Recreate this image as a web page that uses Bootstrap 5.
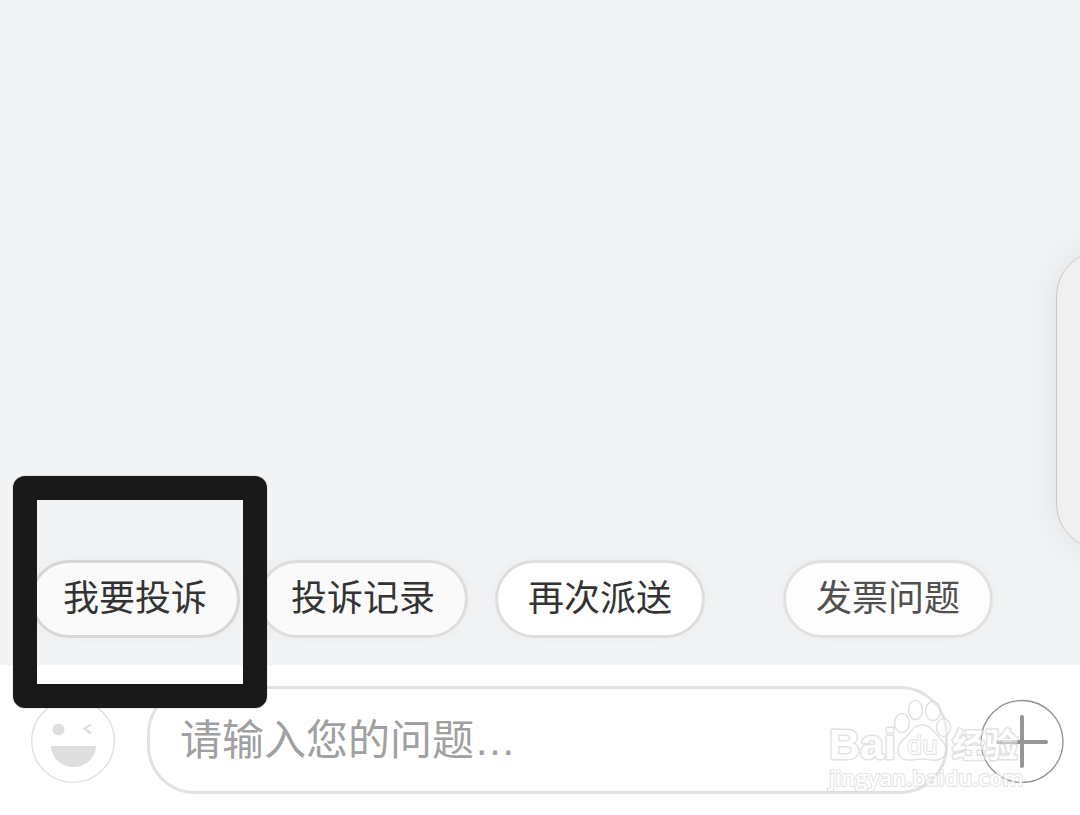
<!DOCTYPE html>
<html lang="zh-CN">
<head>
<meta charset="utf-8">
<meta name="viewport" content="width=device-width, initial-scale=1">
<title>客服</title>
<link href="https://cdn.jsdelivr.net/npm/bootstrap@5.3.0/dist/css/bootstrap.min.css" rel="stylesheet">
<style>
  body { background: #f2f3f5; font-family: "Liberation Sans", "Noto Sans CJK SC", sans-serif; }
  .quick-bar { padding: 0 30px 27px; }
  .chip {
    width: 210px; height: 78px; padding: 0; border: 3px solid #dcdddd; border-radius: 39px;
    background: #fff; color: #333; font-size: 36px; line-height: 54px; white-space: nowrap;
    box-shadow: 0 0 16px rgba(0, 0, 0, .03);
  }
  .chip-first { background: #fafafa; border-color: #d6d6d6; }
  .chip-soft { background: #fafafa; margin-left: 18px; }
  .chip-third { margin-left: 27px; }
  .chip-last { background: #fdfdfd; border-color: #e0e1e1; color: #505050; margin-left: 78px; }
  .composer { height: 150px; padding: 21px 16px 0 31px; background: #fff; }
  .composer-row { height: 108px; }
  .message-box {
    height: 108px; margin: 0 32px; padding: 2px 30px 0; border: 3px solid #e2e2e2; border-radius: 48px;
    background: #fff; font-size: 42px; min-width: 0;
  }
  .message-box::placeholder { color: #a0a0a0; opacity: 1; }
  .round-btn { width: 84px; height: 84px; margin-top: 2px; }
  .side-panel {
    right: -80px; top: 251px; width: 104px; height: 298px; border: 1px solid #c6c8ca; border-radius: 45px;
    background: #f0f0f0; box-shadow: 0 0 40px rgba(0, 0, 0, .08);
  }
  .callout-ring { left: 13px; bottom: 107px; width: 254px; height: 232px; border: 24px solid #191919; border-radius: 12px; box-shadow: 0 0 1px #555; pointer-events: none; }
  .watermark { right: 50px; bottom: 20px; width: 210px; height: 100px; pointer-events: none; }
</style>
</head>
<body>
<div class="position-relative d-flex flex-column min-vh-100 overflow-hidden">
  <main class="flex-grow-1"></main>
  <aside class="side-panel position-absolute"></aside>

  <nav class="quick-bar d-flex" aria-label="快捷问题">
    <button type="button" class="chip chip-first flex-shrink-0">我要投诉</button>
    <button type="button" class="chip chip-soft flex-shrink-0">投诉记录</button>
    <button type="button" class="chip chip-third flex-shrink-0">再次派送</button>
    <button type="button" class="chip chip-last flex-shrink-0">发票问题</button>
  </nav>

  <form class="composer">
    <div class="composer-row d-flex align-items-center">
      <button type="button" class="round-btn btn p-0 border-0 flex-shrink-0 d-flex" aria-label="表情">
        <svg width="84" height="84" viewBox="0 0 84 84" fill="none">
          <circle cx="42" cy="42" r="41.3" stroke="#dedede" stroke-width="1.3"/>
          <circle cx="27.5" cy="30.5" r="6" fill="#dedede"/>
          <path d="M60 25.500L53.500 29.500L60 34.500" stroke="#dedede" stroke-width="2.500"/>
          <path d="M20 47H65C64.500 59 55 68 42.500 68S20.500 59 20 47Z" fill="#dedede"/>
        </svg>
      </button>
      <input type="text" class="message-box flex-grow-1" placeholder="请输入您的问题…" aria-label="问题">
      <button type="button" class="round-btn btn p-0 border-0 flex-shrink-0 d-flex" aria-label="更多">
        <svg width="84" height="84" viewBox="0 0 84 84" fill="none">
          <circle cx="42" cy="42.500" r="41" stroke="#909090" stroke-width="1.300"/>
          <path d="M42 18V67M18 43H66" stroke="#969696" stroke-width="4" stroke-linecap="round"/>
        </svg>
      </button>
    </div>
  </form>

  <svg class="watermark position-absolute" viewBox="820 695 210 100" aria-hidden="true">
    <g fill="#fff" stroke="#d6d6d6" stroke-width="1.500" stroke-linejoin="round" opacity=".7">
      <g stroke-width="3" paint-order="stroke" font-weight="700">
        <text x="829" y="759" font-family="Liberation Sans" font-size="43">Bai</text>
        <text x="952" y="757" font-family="Noto Sans CJK SC" font-size="33">经验</text>
      </g>
      <g fill-opacity=".5">
        <ellipse cx="902" cy="723" rx="7.500" ry="9.500"/>
        <ellipse cx="915.500" cy="710" rx="7" ry="9.500"/>
        <ellipse cx="933" cy="711" rx="7.500" ry="9.500"/>
        <ellipse cx="943.500" cy="727.500" rx="7" ry="9"/>
        <path d="M922 725C915 725 912 730 908 735C903 740 898 743 898 750C898 757 903 760 909 760C914 760 917 759 922 759S931 761 937 760C944 759 947 754 946 748C945 741 939 738 935 733C931 728 928 725 922 725Z"/>
      </g>
      <text x="907" y="754" font-family="Open Sans" font-size="25" stroke-width="2" paint-order="stroke">du</text>
      <text x="829" y="786" font-family="Open Sans" font-size="22" font-weight="600" stroke-width="2" paint-order="stroke">jingyan.baidu.com</text>
    </g>
  </svg>

  <div class="callout-ring position-absolute"></div>
</div>
<script src="https://cdn.jsdelivr.net/npm/bootstrap@5.3.0/dist/js/bootstrap.bundle.min.js"></script>
</body>
</html>
